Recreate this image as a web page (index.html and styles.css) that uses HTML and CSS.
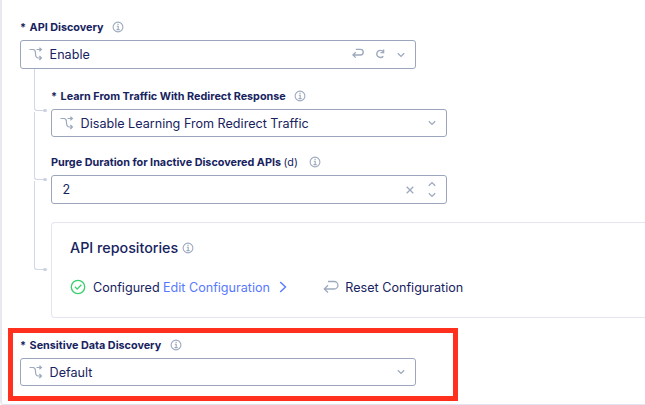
FILE: index.html
```html
<!DOCTYPE html>
<html lang="en">
<head>
<meta charset="utf-8">
<title>API Discovery</title>
<link rel="stylesheet" href="styles.css">
</head>
<body>
<svg class="defs" width="0" height="0">
  <symbol id="info" viewBox="0 0 12 12"><circle cx="6" cy="6" r="4.9"/><path d="M4.8 5.2H6.2V8.7M4.5 8.6H7.7M5.5 3.4H6.7"/></symbol>
  <symbol id="branch" viewBox="0 0 14 14"><path d="M.5 2.5H5M7.5 2.5H12M10.4 .7L12.4 2.5L10.4 4.3M3.5 2.5C6 2.5 6.5 4 6.5 6.5C6.5 9.5 7.5 11 9.5 11H12M10.4 9L12.4 11L10.4 13"/></symbol>
  <symbol id="down" viewBox="0 0 8 6"><path d="M.8 1.2L4 4.4L7.2 1.2"/></symbol>
  <symbol id="undo" viewBox="0 0 16 14"><path d="M5 1.5H11.2A3.7 3.7 0 0 1 11.2 9H1.5M5 5.3L1.3 9L5 12.5"/></symbol>
</svg>
<main class="panel">
  <div class="label"><span class="star">*</span><span>API Discovery</span><svg class="info"><use href="#info"/></svg></div>
  <div class="field tall"><svg class="branch"><use href="#branch"/></svg><span class="value">Enable</span>
    <svg class="undo-sm"><use href="#undo"/></svg>
    <svg class="redo" viewBox="0 0 10 10"><path d="M8.2 7.2A3.6 3.6 0 1 1 8.2 2.7M8.6 .6V3.6H5.5"/></svg>
    <svg class="down"><use href="#down"/></svg></div>
  <div class="nested">
    <div class="gutter"><i class="link first"></i><i class="link second"></i><i class="link third"></i></div>
    <div class="children">
      <div class="label"><span class="star">*</span><span>Learn From Traffic With Redirect Response</span><svg class="info"><use href="#info"/></svg></div>
      <div class="field"><svg class="branch"><use href="#branch"/></svg><span class="value">Disable Learning From Redirect Traffic</span><svg class="down"><use href="#down"/></svg></div>
      <div class="label purge"><span>Purge Duration for Inactive Discovered APIs <span class="unit">(d)</span></span><svg class="info"><use href="#info"/></svg></div>
      <div class="field tall number"><span class="value">2</span>
        <svg class="clear" viewBox="0 0 8 8"><path d="M.7 .7L7.3 7.3M7.3 .7L.7 7.3"/></svg>
        <span class="stepper"><svg class="down up"><use href="#down"/></svg><svg class="down"><use href="#down"/></svg></span></div>
      <section class="card">
        <div class="title"><span>API repositories</span><svg class="info"><use href="#info"/></svg></div>
        <div class="actions">
          <svg class="check" viewBox="0 0 16 16"><circle cx="8" cy="8" r="6.7"/><path d="M5 7.8L7.2 10.1L11.3 5.8"/></svg>
          <span>Configured</span><a class="edit">Edit Configuration</a>
          <svg class="next" viewBox="0 0 8 12"><path d="M1.2 1L6.5 6L1.2 11"/></svg>
          <svg class="undo"><use href="#undo"/></svg><span>Reset Configuration</span>
        </div>
      </section>
    </div>
  </div>
  <div class="highlight">
    <div class="label"><span class="star">*</span><span>Sensitive Data Discovery</span><svg class="info"><use href="#info"/></svg></div>
    <div class="field"><svg class="branch"><use href="#branch"/></svg><span class="value">Default</span><svg class="down"><use href="#down"/></svg></div>
  </div>
</main>
</body>
</html>
```
FILE: styles.css
```css
* { box-sizing: border-box; }
body { margin: 0; height: 405px; overflow: hidden; background: #fff; font-family: Inter, "Liberation Sans", sans-serif; color: #17235e; }
.defs { position: absolute; }
svg { display: block; flex: none; fill: none; stroke: #9da9bd; stroke-width: 1.3; }
span, a { white-space: nowrap; }
.panel { height: 405px; padding: 14px 0 0 18px; border-left: 2px solid #e8e8f1; border-bottom: 1px solid #e2e3ef; border-bottom-left-radius: 4px; }
.label { display: flex; align-items: center; height: 26px; font-size: 10.8px; font-weight: 700; }
.star { width: 9.6px; }
.unit { font-weight: 400; }
.info { width: 12px; height: 12px; margin: 0 0 1px 8.5px; stroke-width: 1.1; }
.field { display: flex; align-items: center; width: 396px; height: 28px; padding: 0 10.5px 0 8px; border: 1px solid #9ba6bd; border-radius: 3px; }
.tall { height: 29px; }
.branch { width: 14px; height: 14px; margin: 0 6.6px 1px 0; stroke-width: 1.2; }
.value { flex: 1; font-size: 12.6px; }
.down { width: 8px; height: 6px; }
.undo-sm { width: 12px; height: 11px; margin: 0 11px 2px 0; stroke-width: 1.8; }
.redo { width: 10px; height: 10px; margin: 0 12px 2px 0; stroke-width: 1.4; }
.nested { display: flex; margin-left: 14px; }
.gutter { width: 17px; flex: none; }
.link { display: block; position: relative; width: 11px; border: solid #d1d7e6; border-width: 0 0 1px 1px; border-bottom-left-radius: 3px; }
.link::after { content: ""; position: absolute; right: -2px; bottom: -2px; width: 4px; height: 3px; border-radius: 2px; background: #cbd3e3; }
.first { height: 42px; }
.second { height: 68px; margin-top: 1px; }
.third { height: 89px; margin-top: 1px; }
.children { flex: 1; padding-top: 14px; }
.purge { margin-top: 12px; }
.purge .info { margin-left: 11px; }
.number { padding-left: 10.6px; }
.clear { width: 8px; height: 8px; margin-right: 14px; }
.stepper { display: grid; gap: 5px; }
.up { transform: rotate(180deg); }
.card { height: 96px; margin-top: 18px; padding: 14px 0 0 18px; border: 1px solid #e4e5f0; border-right: 0; border-radius: 4px 0 0 4px; }
.title { display: flex; align-items: center; height: 20px; font-size: 14.3px; font-weight: 500; }
.title .info { margin: 1px 0 0 3.5px; }
.actions { display: flex; align-items: center; height: 20px; margin-top: 20px; font-size: 12.6px; }
.check { width: 16px; height: 16px; margin-right: 7px; stroke: #37d06d; }
.edit { margin-left: 3.3px; color: #5879ff; }
.next { width: 8px; height: 12px; margin-left: 8.5px; stroke: #5879ff; stroke-width: 1.4; }
.undo { width: 16px; height: 14px; margin: 0 6px 0 36.8px; }
.highlight { width: 450px; height: 73px; margin: 10px 0 0 -12px; padding-left: 7px; border: 5px solid #ff301e; }
.highlight .label { height: 24px; margin-bottom: 1px; }
```
